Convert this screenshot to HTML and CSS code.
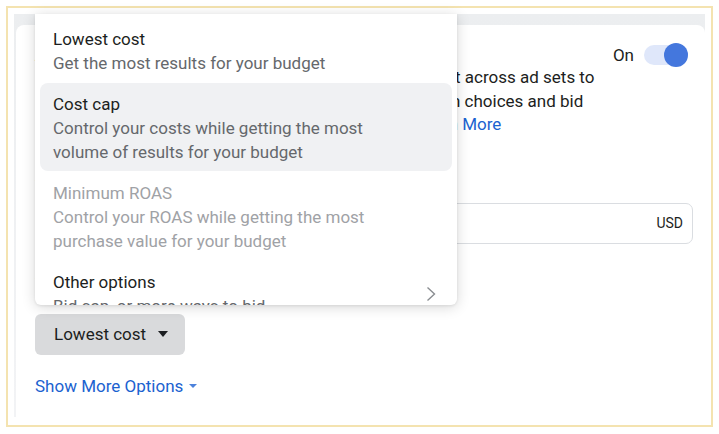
FILE: index.html
```html
<!DOCTYPE html>
<html lang="en">
<head>
<meta charset="utf-8">
<title>Bid strategy</title>
<link rel="stylesheet" href="styles.css">
</head>
<body>
<div class="frame">
  <div class="panel">
    <div class="card">
      <div class="header">
        <div class="title">Advantage campaign budget</div>
        <div class="switch-wrap">
          <span class="switch-label">On</span>
          <span class="switch"><span class="knob"></span></span>
        </div>
      </div>
      <div class="desc">
        <div class="line l1"><span class="pre">Advantage campaign budget will distribute your budge</span>t across ad sets to</div>
        <div class="line l2"><span class="pre">get more results depending on your delivery optimizatio</span>n choices and bid</div>
        <div class="line l3"><span class="pre">strategy. You can control spending on each ad set. Learn</span> <a class="link" href="#">More</a></div>
      </div>
      <div class="section budget">
        <div class="label">Campaign budget</div>
        <div class="input">
          <span class="value">$20.00</span>
          <span class="currency">USD</span>
        </div>
      </div>
      <div class="section strategy">
        <div class="label">Campaign bid strategy</div>
        <button class="select" type="button">Lowest cost <span class="caret"></span></button>
      </div>
      <a class="more" href="#">Show More Options <span class="caret-sm"></span></a>
    </div>

    <div class="menu">
      <div class="item">
        <div class="item-title">Lowest cost</div>
        <div class="item-sub">Get the most results for your budget</div>
      </div>
      <div class="item active">
        <div class="item-title">Cost cap</div>
        <div class="item-sub">Control your costs while getting the most<br>volume of results for your budget</div>
      </div>
      <div class="item disabled">
        <div class="item-title">Minimum ROAS</div>
        <div class="item-sub">Control your ROAS while getting the most<br>purchase value for your budget</div>
      </div>
      <div class="item has-sub">
        <div class="item-text">
          <div class="item-title">Other options</div>
          <div class="item-sub">Bid cap, or more ways to bid</div>
        </div>
        <svg class="chev" width="10" height="16" viewBox="0 0 10 16"><path d="M1.5 1.5 L8.5 8 L1.5 14.5" fill="none" stroke="#8a8d91" stroke-width="1.4"/></svg>
      </div>
    </div>
  </div>
</div>
</body>
</html>
```

FILE: styles.css
```css
* { box-sizing: border-box; }
html, body { margin: 0; padding: 0; background: #ffffff; }
body {
  font-family: Roboto, "Liberation Sans", Arial, sans-serif;
  font-size: 17px;
  color: #1c1e21;
}
.frame {
  margin: 6px;
  width: 707px;
  height: 421px;
  border: 2px solid #f4e3b0;
  padding: 6px 6px 8px 6px;
}
.panel {
  position: relative;
  height: 100%;
  background: linear-gradient(#eceef0, #f2f3f5);
  padding: 11px 0 0 2px;
  display: flex;
  flex-direction: column;
}
.card {
  flex: 1;
  background: #ffffff;
  border-radius: 8px 8px 0 0;
  padding: 18px 12px 0 19px;
  display: flex;
  flex-direction: column;
}
.header {
  display: flex;
  align-items: center;
  justify-content: space-between;
  height: 23px;
  padding-right: 5px;
}
.title { font-weight: 700; }
.switch-wrap { display: flex; align-items: center; gap: 10px; }
.switch-label { line-height: 24px; }
.switch {
  position: relative;
  width: 44px;
  height: 20px;
  border-radius: 10px;
  background: #dfe7fa;
}
.knob {
  position: absolute;
  right: 0;
  top: -2px;
  width: 24px;
  height: 24px;
  border-radius: 50%;
  background: #4477dd;
}
.desc { line-height: 23.5px; color: #1c1e21; }
.line { white-space: nowrap; }
.pre {
  display: inline-block;
  vertical-align: top;
  overflow: hidden;
  text-align: right;
  white-space: nowrap;
  direction: rtl;
}
.l1 .pre { width: 420px; }
.l2 .pre { width: 416px; }
.l3 .pre { width: 423px; }
.link { color: #1b62d0; text-decoration: none; }
.label { line-height: 20px; font-weight: 700; font-size: 15px; }
.budget { margin-top: 34px; display: flex; flex-direction: column; gap: 12px; }
.input {
  height: 41px;
  border: 1px solid #dadde1;
  border-radius: 7px;
  display: flex;
  align-items: center;
  justify-content: space-between;
  padding: 0 9px 0 12px;
}
.currency { font-size: 14px; color: #1c1e21; }
.strategy { margin-top: 25px; display: flex; flex-direction: column; gap: 25px; align-items: flex-start; }
.select {
  height: 41px;
  width: 150px;
  border: none;
  border-radius: 6px;
  background: #d9dadc;
  font-family: inherit;
  font-size: 17px;
  color: #1c1e21;
  padding: 0 0 0 19px;
  display: flex;
  align-items: center;
  text-align: left;
}
.caret {
  margin-left: 12px;
  width: 0;
  height: 0;
  border-left: 5px solid transparent;
  border-right: 5px solid transparent;
  border-top: 6px solid #1c1e21;
}
.more {
  margin-top: 19px;
  line-height: 24px;
  color: #1b62d0;
  text-decoration: none;
  display: inline-flex;
  align-items: center;
  align-self: flex-start;
}
.caret-sm {
  margin-left: 6px;
  width: 0;
  height: 0;
  border-left: 4px solid transparent;
  border-right: 4px solid transparent;
  border-top: 4px solid #4d82db;
}
.menu {
  position: absolute;
  left: 21px;
  top: 0;
  width: 422px;
  height: 291px;
  background: #ffffff;
  border-radius: 0 0 6px 6px;
  box-shadow: 0 2px 14px rgba(0, 0, 0, 0.16), 0 1px 3px rgba(0, 0, 0, 0.08);
  padding: 4px 5px;
  overflow: hidden;
  display: flex;
  flex-direction: column;
  gap: 1px;
}
.item {
  padding: 9px 13px 7px;
  border-radius: 8px;
  line-height: 24px;
  flex: none;
}
.item.active { background: #f0f1f3; }
.item-title { color: #1c1e21; }
.item-sub { color: #65686c; }
.item.disabled .item-title,
.item.disabled .item-sub { color: #9fa2a6; }
.has-sub { display: flex; align-items: center; justify-content: space-between; padding-right: 16px; }
.chev { display: block; }
```
